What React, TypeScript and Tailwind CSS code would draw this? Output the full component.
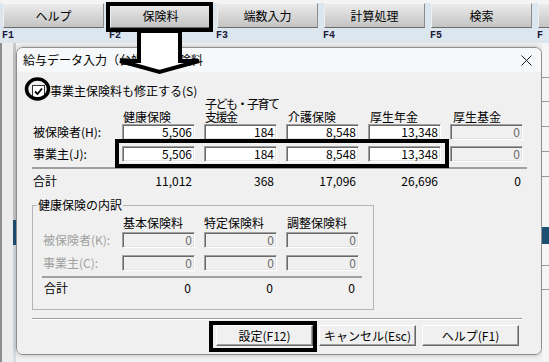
import React from "react";

const jp = "font-['Noto_Sans_CJK_JP','Noto_Sans',sans-serif]";

const toolbar = ["ヘルプ", "保険料", "端数入力", "計算処理", "検索", ""];
const fkeys = ["F1", "F2", "F3", "F4", "F5", "F"];

function Field({ value, disabled }: { value: string; disabled?: boolean }) {
  return (
    <div
      className={
        "flex h-[16px] items-center justify-end border border-t-[#a0a0a0] border-l-[#a0a0a0] border-b-white border-r-white pr-[2px] text-[12px] leading-none shadow-[inset_1px_1px_0_#696969,inset_-1px_-1px_0_#e3e3e3] " +
        (disabled ? "bg-[#f0f0f0] text-[#6d6d6d]" : "bg-white text-black")
      }
    >
      {value}
    </div>
  );
}

function Btn({ label, w }: { label: string; w: string }) {
  return (
    <button
      className={
        "flex h-[21px] items-center justify-center border border-t-white border-l-white border-b-[#696969] border-r-[#696969] bg-[#f0f0f0] text-[12px] leading-none text-black shadow-[inset_-1px_-1px_0_#a0a0a0] " +
        w
      }
    >
      {label}
    </button>
  );
}

function App() {
  return (
    <div className={"relative h-[362px] w-[549px] overflow-hidden bg-[#f0f0f0] text-black " + jp}>
      {/* toolbar */}
      <div className="h-[3px] bg-[#f4f4f4]" />
      <div className="flex gap-[6px] bg-[#dbe6ef] pl-[3px]">
        {toolbar.map((t, i) => (
          <div key={i} className="flex w-[101px] shrink-0 flex-col">
            <div className="flex h-[25px] items-center justify-center border border-t-[#f6f6f6] border-l-[#eeeeee] border-b-[#6b6b6b] border-r-[#8c8c8c] bg-linear-to-b from-[#ebebeb] to-[#c4c4c4] text-[12px] leading-none">
              {t}
            </div>
            <div className="h-[15px] -ml-[1px] pt-[3px] font-['Liberation_Mono',monospace] text-[10px] font-bold leading-none text-[#1c1c3a]">
              {fkeys[i]}
            </div>
          </div>
        ))}
      </div>

      <div className="flex h-[319px]">
        {/* left gutter */}
        <div className="flex w-[16px] shrink-0 border-l-2 border-[#8e8e8e] bg-[#ececec]">
          <div className="flex-1" />
          <div className="flex w-[3px] flex-col">
            <div className="h-[177px] bg-[#c9c9c9]" />
            <div className="h-[25px] bg-[#1d4f73]" />
            <div className="flex-1 bg-[#d6dde3]" />
          </div>
        </div>

        {/* dialog */}
        <div className="mt-[4px] flex h-[308px] w-[526px] shrink-0 flex-col overflow-hidden rounded-[7px] border border-[#8e8e8e] shadow-[0_0_4px_rgba(0,0,0,0.25)]">
          <div className="flex h-[24px] shrink-0 items-center justify-between bg-[#f6f8fa] pl-[6px] pr-[9px]">
            <span className="text-[12px] leading-none">給与データ入力（台帳）－保険料</span>
            <svg width="11" height="11" viewBox="0 0 11 11">
              <path d="M0.5 0.5 L10.5 10.5 M10.5 0.5 L0.5 10.5" stroke="#1a1a1a" strokeWidth="1" />
            </svg>
          </div>

          <div className="flex-1 bg-[#f0f0f0] pl-[15px] pt-[12px]">
            <div className="flex h-[14px] items-center gap-[5px]">
              <div className="flex h-[13px] w-[13px] items-center justify-center border border-[#333333] bg-white">
                <svg width="9" height="9" viewBox="0 0 9 9">
                  <path d="M1 4.5 L3.5 7 L8 1.5" stroke="#000" strokeWidth="1.8" fill="none" />
                </svg>
              </div>
              <span className="text-[12px] leading-none">事業主保険料も修正する(S)</span>
            </div>

            <div className="-mt-[1px] grid h-[26px] grid-cols-[81px_repeat(5,73px)] items-end gap-x-[9px] text-[12px] leading-[13px]">
              <div />
              <div className="pl-[1px]">健康保険</div>
              <div className="whitespace-nowrap pl-[1px] tracking-[-1.5px]">
                <div>子ども・子育て</div>
                <div>支援金</div>
              </div>
              <div className="pl-[2px]">介護保険</div>
              <div className="pl-[2px]">厚生年金</div>
              <div className="pl-[3px]">厚生基金</div>
            </div>

            <div className="mt-[1px] grid grid-cols-[81px_repeat(5,73px)] items-center gap-x-[9px] text-[12px]">
              <div className="pl-[1px] leading-none">被保険者(H):</div>
              <Field value="5,506" />
              <Field value="184" />
              <Field value="8,548" />
              <Field value="13,348" />
              <Field value="0" disabled />
            </div>
            <div className="mt-[6px] grid grid-cols-[81px_repeat(5,73px)] items-center gap-x-[9px] text-[12px]">
              <div className="pl-[1px] leading-none">事業主(J):</div>
              <Field value="5,506" />
              <Field value="184" />
              <Field value="8,548" />
              <Field value="13,348" />
              <Field value="0" disabled />
            </div>

            <div className="mt-[5px] h-[2px] w-[495px] bg-[#a0a0a0]" />

            <div className="mt-[5px] grid h-[14px] grid-cols-[81px_repeat(5,73px)] items-center gap-x-[9px] text-[12px] leading-none">
              <div className="pl-[1px]">合計</div>
              <div className="pr-[3px] text-right">11,012</div>
              <div className="pr-[3px] text-right">368</div>
              <div className="pr-[3px] text-right">17,096</div>
              <div className="pr-[3px] text-right">26,696</div>
              <div className="pr-[2px] text-right">0</div>
            </div>

            {/* 健康保険の内訳 */}
            <div className="relative mt-[17px] h-[105px] w-[342px] border border-[#b4b4b4] pl-[10px]">
              <span className="absolute -top-[8px] left-[4px] bg-[#f0f0f0] px-[1px] text-[12px] leading-[14px]">
                健康保険の内訳
              </span>
              <div className="mt-[11px] grid h-[12px] grid-cols-[70px_repeat(3,73px)] gap-x-[9px] text-[12px] leading-[12px]">
                <div />
                <div className="pl-[1px]">基本保険料</div>
                <div>特定保険料</div>
                <div className="pl-[1px]">調整保険料</div>
              </div>
              <div className="mt-[3px] grid grid-cols-[70px_repeat(3,73px)] items-center gap-x-[9px] text-[12px]">
                <div className="leading-none text-[#a0a0a0]">被保険者(K):</div>
                <Field value="0" disabled />
                <Field value="0" disabled />
                <Field value="0" disabled />
              </div>
              <div className="mt-[7px] grid grid-cols-[70px_repeat(3,73px)] items-center gap-x-[9px] text-[12px]">
                <div className="leading-none text-[#a0a0a0]">事業主(C):</div>
                <Field value="0" disabled />
                <Field value="0" disabled />
                <Field value="0" disabled />
              </div>
              <div className="-ml-[1px] mt-[5px] h-[2px] w-[320px] bg-[#a0a0a0]" />
              <div className="mt-[3px] grid h-[14px] grid-cols-[70px_repeat(3,73px)] items-center gap-x-[9px] text-[12px] leading-none">
                <div className="pl-[1px]">合計</div>
                <div className="pr-[4px] text-right">0</div>
                <div className="pr-[4px] text-right">0</div>
                <div className="pr-[4px] text-right">0</div>
              </div>
            </div>

            <div className="mt-[8px] h-[2px] w-[490px] border-t border-t-[#a0a0a0] border-b border-b-white" />

            <div className="ml-[184px] mt-[5px] flex gap-[6px]">
              <Btn label="設定(F12)" w="w-[97px]" />
              <Btn label="キャンセル(Esc)" w="w-[97px]" />
              <Btn label="ヘルプ(F1)" w="w-[97px]" />
            </div>
          </div>
        </div>

        {/* right gutter */}
        <div className="flex flex-1 flex-col bg-[#f5f5f5]">
          <div className="h-[35px] border-b border-[#9a9a9a]" />
          <div className="h-[24px] border-b border-[#9a9a9a]" />
          <div className="h-[25px] border-b border-[#9a9a9a]" />
          <div className="h-[25px] border-b border-[#9a9a9a]" />
          <div className="h-[25px] border-b border-[#9a9a9a]" />
          <div className="h-[50px]" />
          <div className="h-[17px] bg-[#1d4f73]" />
          <div className="h-[22px] border-b border-[#9a9a9a]" />
          <div className="h-[24px] border-b border-[#9a9a9a]" />
          <div className="flex-1" />
        </div>
      </div>

      {/* annotations */}
      <div className="absolute left-[106px] top-[2px] h-[30px] w-[107px] border-[4px] border-black" />
      <svg className="absolute left-0 top-0" width="549" height="362" viewBox="0 0 549 362">
        <polygon
          points="139,31 139,61 120,61 159.5,72 199,61 180,61 180,31"
          fill="#fff"
          stroke="#000"
          strokeWidth="4"
          strokeLinejoin="miter"
        />
        <ellipse cx="37.5" cy="89" rx="11" ry="10" fill="none" stroke="#000" strokeWidth="3.5" />
      </svg>
      <div className="absolute left-[115px] top-[139px] h-[29px] w-[334px] border-[4px] border-black" />
      <div className="absolute left-[209px] top-[321px] h-[31px] w-[108px] border-[4px] border-black" />
    </div>
  );
}

export default App;
